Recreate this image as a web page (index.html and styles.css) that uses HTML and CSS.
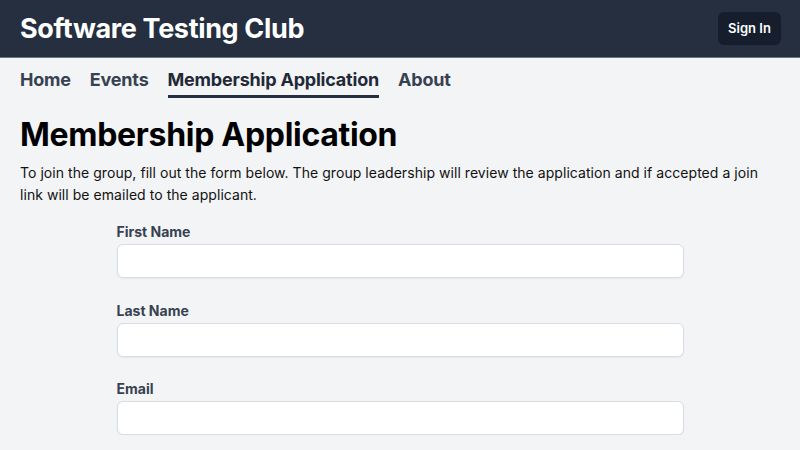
FILE: index.html
```html
<!DOCTYPE html>
<html lang="en">
<head>
<meta charset="utf-8">
<title>Membership Application</title>
<link rel="stylesheet" href="styles.css">
</head>
<body>
<header class="topbar">
  <h1 class="brand">Software Testing Club</h1>
  <button class="signin" type="button">Sign In</button>
</header>
<nav class="nav">
  <a class="nav-link" href="#">Home</a>
  <a class="nav-link" href="#">Events</a>
  <a class="nav-link active" href="#">Membership Application</a>
  <a class="nav-link" href="#">About</a>
</nav>
<main class="main">
  <h2 class="title">Membership Application</h2>
  <p class="intro">To join the group, fill out the form below. The group leadership will review the application and if accepted a join link will be emailed to the applicant.</p>
  <form class="form">
    <div class="field">
      <label class="label" for="first">First Name</label>
      <input class="input" id="first" type="text">
    </div>
    <div class="field">
      <label class="label" for="last">Last Name</label>
      <input class="input" id="last" type="text">
    </div>
    <div class="field">
      <label class="label" for="email">Email</label>
      <input class="input" id="email" type="email">
    </div>
  </form>
</main>
</body>
</html>
```
FILE: styles.css
```css
* { box-sizing: border-box; }
html, body { margin: 0; padding: 0; }
body {
  background: #f3f4f6;
  font-family: Inter, "Noto Sans", sans-serif;
  color: #111827;
}
.topbar {
  height: 58px;
  background: #252f3f;
  border-bottom: 1px solid #6b7280;
  display: flex;
  align-items: center;
  justify-content: space-between;
  padding: 0 19px 0 20px;
}
.brand {
  margin: 0;
  color: #fff;
  font-size: 27px;
  font-weight: 700;
  letter-spacing: -0.35px;
}
.signin {
  background: #161e2e;
  color: #fff;
  border: 0;
  border-radius: 6px;
  height: 33px;
  width: 63px;
  padding: 0;
  font-family: inherit;
  font-size: 13px;
  font-weight: 600;
  margin-top: -1px;
}
.nav {
  display: flex;
  gap: 19px;
  padding: 10px 20px 0;
}
.nav-link {
  color: #374151;
  text-decoration: none;
  font-size: 18px;
  font-weight: 700;
  letter-spacing: -0.2px;
  padding-bottom: 3px;
  border-bottom: 3px solid transparent;
  line-height: 24px;
}
.nav-link.active {
  color: #1f2937;
  border-bottom-color: #252f3f;
}
.main {
  padding: 0 20px;
}
.title {
  margin: 17px 0 7px;
  font-size: 32px;
  font-weight: 700;
  color: #000;
  line-height: 40px;
  letter-spacing: -0.3px;
}
.intro {
  margin: 0;
  font-size: 14px;
  line-height: 22px;
  color: #111;
  letter-spacing: 0.05px;
}
.form {
  width: 567px;
  margin: 17px auto 0;
  display: flex;
  flex-direction: column;
  gap: 23.5px;
}
.field {
  display: flex;
  flex-direction: column;
  gap: 3px;
}
.label {
  font-size: 14px;
  font-weight: 700;
  color: #374151;
  line-height: 18px;
}
.input {
  height: 34px;
  border: 1px solid #d9dce1;
  border-radius: 6px;
  background: #fff;
  box-shadow: 0 1px 2px rgba(0,0,0,0.05);
  font-family: inherit;
  font-size: 14px;
  padding: 0 10px;
}
```
